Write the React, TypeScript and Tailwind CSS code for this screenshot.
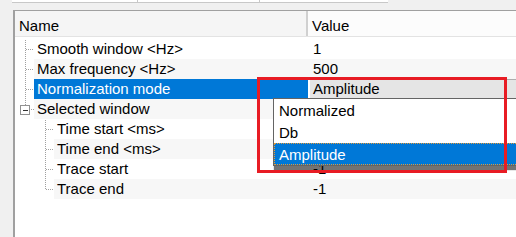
import React from "react";

type Row = {
  label: string;
  value: string;
  level: 0 | 1;
  selected?: boolean;
  combo?: boolean;
};

const ROWS: Row[] = [
  { label: "Smooth window <Hz>", value: "1", level: 0 },
  { label: "Max frequency <Hz>", value: "500", level: 0 },
  { label: "Normalization mode", value: "Amplitude", level: 0, selected: true, combo: true },
  { label: "Selected window", value: "", level: 0 },
  { label: "Time start <ms>", value: "", level: 1 },
  { label: "Time end <ms>", value: "", level: 1 },
  { label: "Trace start", value: "-1", level: 1 },
  { label: "Trace end", value: "-1", level: 1 },
];

const OPTIONS = ["Normalized", "Db", "Amplitude"];

function TreeLines() {
  // dotted connector lines + the collapse box, drawn in the tree gutter
  const dot = { stroke: "#a0a0a0", strokeWidth: 1, strokeDasharray: "1 1", shapeRendering: "crispEdges" as const };
  return (
    <svg className="pointer-events-none absolute left-0 top-0" width="60" height="200">
      <line x1="25.5" y1="40" x2="25.5" y2="105" {...dot} />
      <line x1="26" y1="49.5" x2="34" y2="49.5" {...dot} />
      <line x1="26" y1="69.5" x2="34" y2="69.5" {...dot} />
      <line x1="26" y1="89.5" x2="34" y2="89.5" {...dot} />
      <line x1="29" y1="109.5" x2="34" y2="109.5" {...dot} />
      <rect x="20.5" y="105.5" width="9" height="9" fill="#fff" stroke="#919191" shapeRendering="crispEdges" />
      <line x1="23" y1="110" x2="28" y2="110" stroke="#333" shapeRendering="crispEdges" />
      <line x1="45.5" y1="120" x2="45.5" y2="190" {...dot} />
      <line x1="46" y1="129.5" x2="54" y2="129.5" {...dot} />
      <line x1="46" y1="149.5" x2="54" y2="149.5" {...dot} />
      <line x1="46" y1="169.5" x2="54" y2="169.5" {...dot} />
      <line x1="46" y1="189.5" x2="54" y2="189.5" {...dot} />
    </svg>
  );
}

export default function App() {
  return (
    <div className="relative h-[237px] w-[516px] overflow-hidden bg-[#f0f0f0] font-['Liberation_Sans',Arial,sans-serif] text-[15px] text-black">
      <div className="ml-[12px] flex h-[3px] w-[376px] border-b border-[#c8c8c8] bg-white">
        <div className="w-[126px] border-r border-[#c8c8c8]" />
        <div className="w-[122px] border-r border-[#c8c8c8]" />
      </div>

      <div className="ml-[13px] mt-[7px] h-[240px] border-l-2 border-t border-[#a0a0a0] bg-white">
        <div className="flex h-[26px] border-b border-[#e3e3e3] leading-[20px]">
          <div className="w-[293px] border-r-2 border-[#d0d0d0] bg-[#f5f5f5] pl-[4px] pt-[5px]">Name</div>
          <div className="flex-1 bg-[#fcfcfc] pl-[4px] pt-[5px]">Value</div>
        </div>
        <div className="h-[2px]" />
        {ROWS.map((r, i) => (
          <div key={r.label} className="flex h-[20px] leading-[20px]">
            <div className={r.level === 0 ? "w-[19px] shrink-0" : "w-[39px] shrink-0"} />
            <div
              className={[
                "flex min-w-0 flex-1",
                i % 2 === 1 && !r.selected ? "bg-[#f7f7f7]" : "",
              ].join(" ")}
            >
              <div
                className={[
                  "shrink-0 pl-[3px]",
                  r.level === 0 ? "w-[274px]" : "w-[254px]",
                  r.selected ? "bg-[#0078d7] text-white" : "",
                ].join(" ")}
              >
                {r.label}
              </div>
              {r.combo ? (
                <div className="ml-[2px] h-[20px] flex-1 border-y border-[#adadad] bg-[#e5e5e5] pl-[3px] leading-[18px]">
                  {r.value}
                </div>
              ) : (
                <div className="flex-1 pl-[5px]">{r.value}</div>
              )}
            </div>
          </div>
        ))}
      </div>

      <div className="absolute left-0 top-0">
        <TreeLines />
      </div>

      <div className="absolute left-[273px] top-[98px] w-[260px] border border-[#646464] bg-white shadow-[1px_4px_1px_rgba(0,0,0,0.55)]">
        {OPTIONS.map((o) => (
          <div
            key={o}
            className={
              o === "Amplitude"
                ? "h-[22px] border border-dotted border-[#e09a3c] bg-[#0078d7] pl-[4px] pt-[1px] leading-[19px] text-white"
                : "h-[22px] pl-[5px] pt-[1px] leading-[21px]"
            }
          >
            {o}
          </div>
        ))}
      </div>

      <div className="pointer-events-none absolute left-[257px] top-[77px] h-[96px] w-[250px] border-[3px] border-[#e81c24]" />
    </div>
  );
}
